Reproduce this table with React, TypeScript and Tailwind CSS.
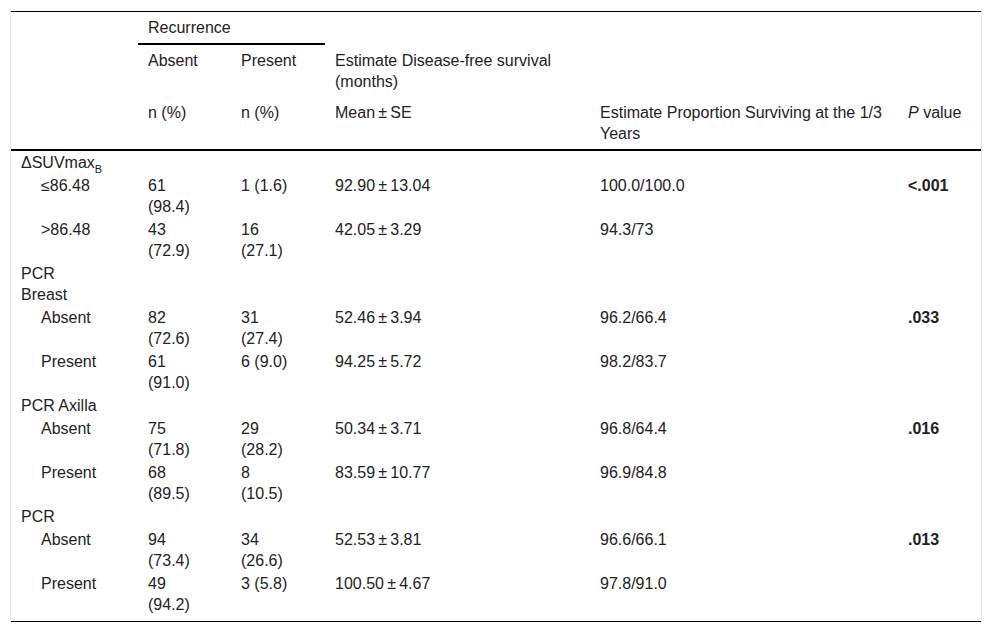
import React from 'react';

type Row =
  | { kind: 'group'; label: React.ReactNode }
  | {
      kind: 'item';
      label: string;
      absent: string[];
      present: string[];
      mean: string;
      est: string;
      p?: string;
    };

const PM = '\u2009±\u2009';

const ROWS: Row[] = [
  { kind: 'group', label: <>ΔSUVmax<sub className="text-[11px] bottom-[-5px]">B</sub></> },
  { kind: 'item', label: '≤86.48', absent: ['61', '(98.4)'], present: ['1 (1.6)'], mean: `92.90${PM}13.04`, est: '100.0/100.0', p: '<.001' },
  { kind: 'item', label: '>86.48', absent: ['43', '(72.9)'], present: ['16', '(27.1)'], mean: `42.05${PM}3.29`, est: '94.3/73' },
  { kind: 'group', label: <>PCR<br />Breast</> },
  { kind: 'item', label: 'Absent', absent: ['82', '(72.6)'], present: ['31', '(27.4)'], mean: `52.46${PM}3.94`, est: '96.2/66.4', p: '.033' },
  { kind: 'item', label: 'Present', absent: ['61', '(91.0)'], present: ['6 (9.0)'], mean: `94.25${PM}5.72`, est: '98.2/83.7' },
  { kind: 'group', label: 'PCR Axilla' },
  { kind: 'item', label: 'Absent', absent: ['75', '(71.8)'], present: ['29', '(28.2)'], mean: `50.34${PM}3.71`, est: '96.8/64.4', p: '.016' },
  { kind: 'item', label: 'Present', absent: ['68', '(89.5)'], present: ['8', '(10.5)'], mean: `83.59${PM}10.77`, est: '96.9/84.8' },
  { kind: 'group', label: 'PCR' },
  { kind: 'item', label: 'Absent', absent: ['94', '(73.4)'], present: ['34', '(26.6)'], mean: `52.53${PM}3.81`, est: '96.6/66.1', p: '.013' },
  { kind: 'item', label: 'Present', absent: ['49', '(94.2)'], present: ['3 (5.8)'], mean: `100.50${PM}4.67`, est: '97.8/91.0' },
];

const lines = (parts: string[]) =>
  parts.map((t, i) => (
    <React.Fragment key={i}>
      {i > 0 && <br />}
      {t}
    </React.Fragment>
  ));

export default function App() {
  const th = 'font-normal text-left align-top px-[10px] py-[5px]';
  const last = ROWS.length - 1;

  return (
    <div
      className="min-h-screen bg-white pt-[10px]"
      style={{ fontFamily: '"Liberation Sans", Arial, sans-serif' }}
    >
      <div className="ml-[10px] w-[972px] border-x border-[#e6e6e6] pt-px">
        <table className="w-[970px] table-fixed border-separate border-spacing-0 border-t border-b border-black text-[16px] leading-[21px] text-[#222]">
          <colgroup>
            <col className="w-[127px]" />
            <col className="w-[93px]" />
            <col className="w-[94px]" />
            <col className="w-[265px]" />
            <col className="w-[308px]" />
            <col className="w-[83px]" />
          </colgroup>
          <thead>
            <tr>
              <th className={th} />
              <th colSpan={2} className={`${th} border-b-2 border-black`}>Recurrence</th>
              <th colSpan={3} className={th} />
            </tr>
            <tr>
              <th className={th} />
              <th className={th}>Absent</th>
              <th className={th}>Present</th>
              <th className={th}>Estimate Disease-free survival<br />(months)</th>
              <th className={th} />
              <th className={th} />
            </tr>
            <tr>
              <th className={`${th} border-b-2 border-black`} />
              <th className={`${th} border-b-2 border-black`}>n (%)</th>
              <th className={`${th} border-b-2 border-black`}>n (%)</th>
              <th className={`${th} border-b-2 border-black`}>Mean{PM}SE</th>
              <th className={`${th} border-b-2 border-black`}>Estimate Proportion Surviving at the 1/3<br />Years</th>
              <th className={`${th} border-b-2 border-black`}><i>P</i> value</th>
            </tr>
          </thead>
          <tbody>
            {ROWS.map((r, i) => {
              const td = `align-top px-[10px] pt-px ${i === last ? 'pb-[6px]' : 'pb-px'}`;
              if (r.kind === 'group') {
                return (
                  <tr key={i}>
                    <td className={td}>{r.label}</td>
                    <td className={td} colSpan={5} />
                  </tr>
                );
              }
              return (
                <tr key={i}>
                  <td className={`${td} !pl-[30px]`}>{r.label}</td>
                  <td className={td}>{lines(r.absent)}</td>
                  <td className={td}>{lines(r.present)}</td>
                  <td className={td}>{r.mean}</td>
                  <td className={td}>{r.est}</td>
                  <td className={`${td} font-bold`}>{r.p ?? ''}</td>
                </tr>
              );
            })}
          </tbody>
        </table>
      </div>
    </div>
  );
}
